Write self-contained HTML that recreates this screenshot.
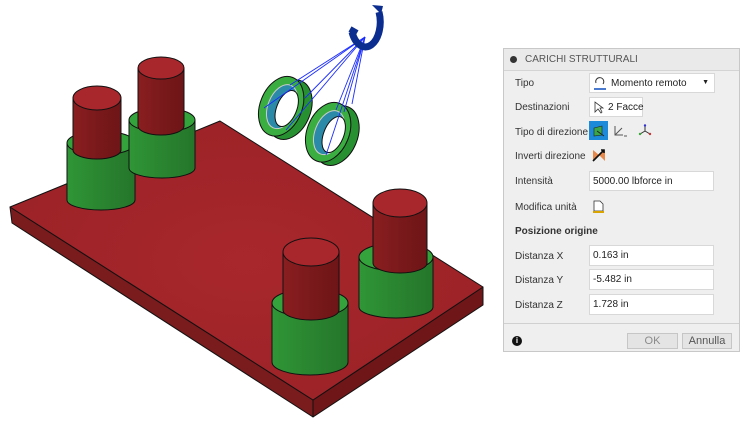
<!DOCTYPE html>
<html><head><meta charset="utf-8"><style>
body{margin:0;width:750px;height:424px;background:#fff;position:relative;overflow:hidden;font-family:"Liberation Sans",sans-serif;font-size:10px;color:#222}
svg{position:absolute;left:0;top:0}
.dlg{position:absolute;left:503px;top:48px;width:237px;height:304px;background:#efefef;border:1px solid #c8c8c8;box-sizing:border-box}
.hd{height:21px;border-bottom:1px solid #d4d4d4;background:#eaeaea;position:relative}
.hd span{position:absolute;left:21px;top:5px;color:#555;font-size:10px}
.hd i{position:absolute;left:6px;top:7px;width:7px;height:7px;border-radius:50%;background:#333}
.l{position:absolute;left:11px;font-size:10px;color:#333}
.f{position:absolute;left:85px;width:126px;height:20px;background:#fff;border:1px solid #d8d8d8;box-sizing:border-box;font-size:10px;padding:4px 0 0 3px;white-space:nowrap}
.btn{position:absolute;top:284px;height:16px;border:1px solid #c6c6c6;background:#e4e4e4;box-sizing:border-box;color:#8a8a8a;text-align:center;font-size:11px;padding-top:1px}
</style></head><body>
<svg width="500" height="424" viewBox="0 0 500 424">
<defs>
<linearGradient id="rs" x1="0" x2="1"><stop offset="0" stop-color="#8a1e20"/><stop offset="0.5" stop-color="#7a191b"/><stop offset="1" stop-color="#6e1517"/></linearGradient>
<linearGradient id="gs" x1="0" x2="1"><stop offset="0" stop-color="#2f9636"/><stop offset="0.5" stop-color="#2a8530"/><stop offset="1" stop-color="#24762a"/></linearGradient>
<radialGradient id="pl" cx="0.5" cy="0.5" r="0.6"><stop offset="0" stop-color="#a8272c"/><stop offset="1" stop-color="#9a2227"/></radialGradient>
</defs>
<g stroke="#111" stroke-width="1" stroke-linejoin="round">
<polygon points="10,207 313,400 313,417 12,223" fill="#7a1b1d"/>
<polygon points="313,400 483,287 483,305 313,417" fill="#6e1618"/>
<polygon points="10,207 220,121 483,287 313,400" fill="url(#pl)"/>
</g>
<g stroke="#111" stroke-width="1">
<path d="M67,143 L67,200 A34,10 0 0 0 135,200 L135,143 Z" fill="url(#gs)"/>
<ellipse cx="101" cy="143" rx="34" ry="12" fill="#34a33c"/>
<path d="M73,98 L73,150 A24,9 0 0 0 121,150 L121,98 Z" fill="url(#rs)"/>
<ellipse cx="97" cy="98" rx="24" ry="12" fill="#a8272c"/>
<path d="M129,120 L129,168 A33,10 0 0 0 195,168 L195,120 Z" fill="url(#gs)"/>
<ellipse cx="162" cy="120" rx="33" ry="12" fill="#34a33c"/>
<path d="M138,68 L138,126 A23,9 0 0 0 184,126 L184,68 Z" fill="url(#rs)"/>
<ellipse cx="161" cy="68" rx="23" ry="11" fill="#a8272c"/>
<path d="M359,257 L359,307 A37,11 0 0 0 433,307 L433,257 Z" fill="url(#gs)"/>
<ellipse cx="396" cy="257" rx="37" ry="14" fill="#34a33c"/>
<path d="M373,203 L373,263 A27,10 0 0 0 427,263 L427,203 Z" fill="url(#rs)"/>
<ellipse cx="400" cy="203" rx="27" ry="14" fill="#a8272c"/>
<path d="M272,303 L272,362 A38,13 0 0 0 348,362 L348,303 Z" fill="url(#gs)"/>
<ellipse cx="310" cy="303" rx="38" ry="14" fill="#34a33c"/>
<path d="M283,252 L283,310 A28,10 0 0 0 339,310 L339,252 Z" fill="url(#rs)"/>
<ellipse cx="311" cy="252" rx="28" ry="14" fill="#a8272c"/>
</g>
<g stroke="#111" stroke-width="1">
<g transform="rotate(22 283 107)">
<ellipse cx="290" cy="107" rx="21" ry="31" fill="#279030"/>
<ellipse cx="281" cy="107" rx="21" ry="31" fill="#3aae40"/>
<ellipse cx="282" cy="107" rx="14" ry="23" fill="#2a8aa8" stroke="#ccc"/>
<ellipse cx="287" cy="107" rx="10" ry="19" fill="#fff"/>
</g>
<g transform="rotate(22 330 133)">
<ellipse cx="337" cy="133" rx="21" ry="31" fill="#279030"/>
<ellipse cx="328" cy="133" rx="21" ry="31" fill="#3aae40"/>
<ellipse cx="329" cy="133" rx="14" ry="23" fill="#2a8aa8" stroke="#ccc"/>
<ellipse cx="334" cy="133" rx="10" ry="19" fill="#fff"/>
</g>
</g>
<g stroke="#1a2cff" stroke-width="0.9">
<line x1="365" y1="37" x2="264" y2="108"/><line x1="365" y1="37" x2="290" y2="85"/><line x1="365" y1="37" x2="305" y2="98"/><line x1="365" y1="37" x2="286" y2="130"/>
<line x1="365" y1="37" x2="336" y2="110"/><line x1="365" y1="37" x2="344" y2="112"/><line x1="365" y1="37" x2="326" y2="155"/><line x1="365" y1="37" x2="352" y2="104"/>
</g>
<path d="M352,32 A13,22 0 0 0 379,12" fill="none" stroke="#0b2d8f" stroke-width="7"/>
<path d="M350,29 L357,33" stroke="#0b2d8f" stroke-width="6"/>
<polygon points="372,5 383,6 381,14" fill="#0b2d8f"/>
</svg>

<div class="dlg">
<div class="hd"><i></i><span>CARICHI STRUTTURALI</span></div>
<div class="l" style="top:29px">Tipo</div>
<div class="f" style="top:24px;width:126px;padding-left:21px">Momento remoto<span style="position:absolute;right:5px;top:5px;font-size:7px">▼</span>
<svg width="14" height="16" style="left:3px;top:2px"><path d="M3,7 A4,4 0 1 1 10,8" fill="none" stroke="#333"/><rect x="1" y="12" width="12" height="2" fill="#4a7ad0"/></svg></div>
<div class="l" style="top:53px">Destinazioni</div>
<div class="f" style="top:48px;width:54px;padding-left:18px">2 Facce
<svg width="10" height="13" style="left:4px;top:3px"><path d="M1,1 L1,11 L4,8 L7,12 L8,11 L6,7 L9,7 Z" fill="#fff" stroke="#333" stroke-width="0.8"/></svg></div>
<div class="l" style="top:78px">Tipo di direzione</div>
<div style="position:absolute;left:85px;top:72px;width:19px;height:19px;background:#1c8ad8"></div>
<svg width="12" height="12" style="left:89px;top:76px"><polygon points="1,3 9,1 9,10 1,11" fill="#3aa84a" stroke="#222" stroke-width="0.6"/><line x1="4" y1="6" x2="11" y2="11" stroke="#222"/></svg>
<svg width="14" height="12" style="left:110px;top:76px"><path d="M1,1 L1,10 L9,10 M1,10 L8,3" fill="none" stroke="#555"/><path d="M10,11 L13,11" stroke="#555"/></svg>
<svg width="14" height="12" style="left:134px;top:75px"><path d="M7,1 L7,7 L2,10 M7,7 L12,10" fill="none" stroke="#333"/><circle cx="2" cy="10" r="1.2" fill="#3a3"/><circle cx="12" cy="10" r="1.2" fill="#c33"/><circle cx="7" cy="1.5" r="1.2" fill="#33c"/></svg>
<div class="l" style="top:102px">Inverti direzione</div>
<svg width="14" height="14" style="left:88px;top:99px"><polygon points="1,2 7,7 1,13" fill="#e8884a"/><polygon points="13,2 7,7 13,13" fill="#e8884a"/><path d="M1,13 L12,2 M9,2 L12,2 L12,5" fill="none" stroke="#111" stroke-width="1.6"/></svg>
<div class="l" style="top:127px">Intensità</div>
<div class="f" style="top:122px;width:125px">5000.00 lbforce in</div>
<div class="l" style="top:153px">Modifica unità</div>
<svg width="12" height="14" style="left:89px;top:151px"><path d="M1,1 L7,1 L10,4 L10,11 L1,11 Z" fill="#fff" stroke="#333" stroke-width="0.8"/><rect x="0" y="11" width="11" height="2" fill="#d9a400"/></svg>
<div class="l" style="top:177px;font-weight:bold;color:#333">Posizione origine</div>
<div class="l" style="top:202px">Distanza X</div>
<div class="f" style="top:196px;width:125px;height:21px">0.163 in</div>
<div class="l" style="top:226px">Distanza Y</div>
<div class="f" style="top:220px;width:125px;height:21px">-5.482 in</div>
<div class="l" style="top:251px">Distanza Z</div>
<div class="f" style="top:245px;width:125px;height:21px">1.728 in</div>
<div style="position:absolute;left:0;right:0;top:274px;border-top:1px solid #d0d0d0"></div>
<div style="position:absolute;left:8px;top:287px;width:10px;height:10px;border-radius:50%;background:#111;color:#fff;font-size:8px;font-weight:bold;text-align:center;line-height:10px">i</div>
<div class="btn" style="left:123px;width:51px">OK</div>
<div class="btn" style="left:178px;width:50px;color:#555">Annulla</div>
</div>
</body></html>
